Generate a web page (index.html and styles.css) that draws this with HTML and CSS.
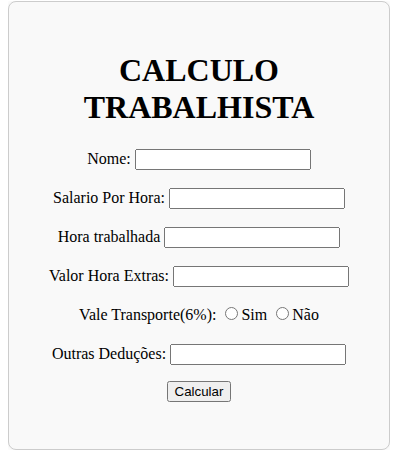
FILE: index.html
```html
<!DOCTYPE html>
<html lang="pt-BR">
<head>
<meta charset="utf-8">
<title>Calculo Trabalhista</title>
<link rel="stylesheet" href="styles.css">
</head>
<body>
<div class="container">
  <h1 class="title">CALCULO TRABALHISTA</h1>
  <form class="form">
    <p class="row"><label for="nome">Nome:</label> <input type="text" id="nome"></p>
    <p class="row"><label for="salario">Salario Por Hora:</label> <input type="text" id="salario"></p>
    <p class="row"><label for="horas">Hora trabalhada</label> <input type="text" id="horas"></p>
    <p class="row"><label for="extras">Valor Hora Extras:</label> <input type="text" id="extras"></p>
    <p class="row"><label>Vale Transporte(6%):</label> <input type="radio" name="vt" id="sim"><label for="sim">Sim</label> <input type="radio" name="vt" id="nao"><label for="nao">Não</label></p>
    <p class="row"><label for="outras">Outras Deduções:</label> <input type="text" id="outras"></p>
    <p class="row row-btn"><button type="button" class="btn">Calcular</button></p>
  </form>
</div>
</body>
</html>
```

FILE: styles.css
```css
html, body {
  background: #ffffff;
}
body {
  margin: 1px 10px 8px 8px;
  font-family: "Liberation Serif", "Times New Roman", serif;
  font-size: 16px;
  color: #000;
}
.container {
  width: 340px;
  padding: 29px 20px 31px;
  background: #f9f9f9;
  border: 1px solid #cccccc;
  border-radius: 8px;
  box-shadow: 0 0 6px rgba(0, 0, 0, 0.08);
  text-align: center;
}
.title {
  font-size: 32px;
  font-weight: bold;
  margin: 21px 0;
}
.row {
  margin: 16px 0;
  line-height: 23px;
}
.row-btn {
  margin-top: 14px;
  line-height: 20px;
}
.btn {
  font-family: "Liberation Sans", Arial, sans-serif;
  font-size: 13.33px;
}
input[type="text"] {
  box-sizing: border-box;
  width: 176px;
  height: 21px;
  font-family: "Liberation Sans", Arial, sans-serif;
  font-size: 13.33px;
}
```
